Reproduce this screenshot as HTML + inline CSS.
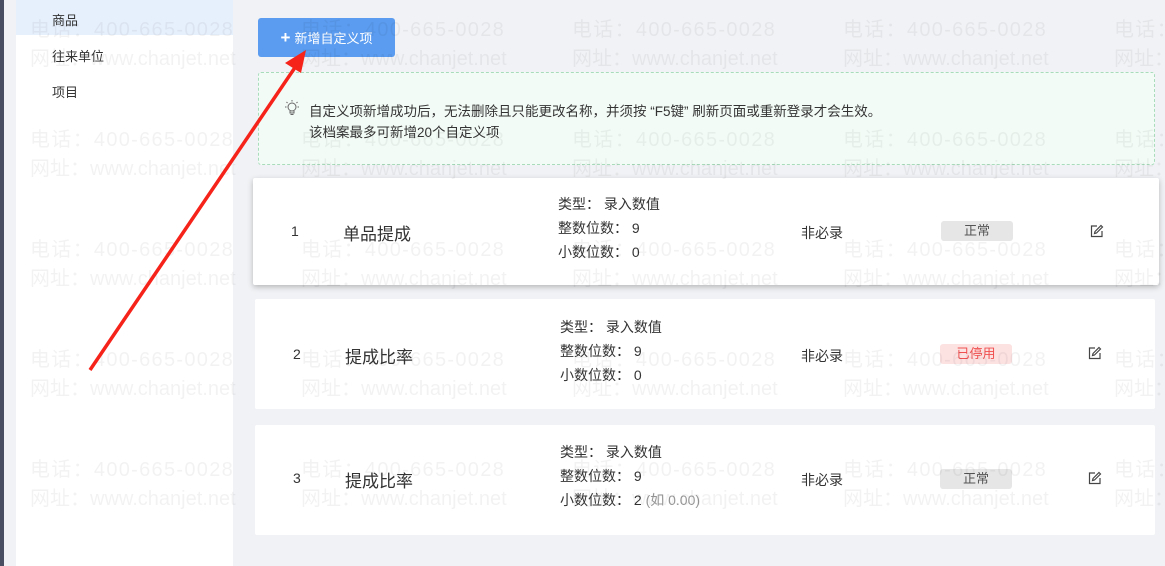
<!DOCTYPE html>
<html><head><meta charset="utf-8"><style>
*{margin:0;padding:0;box-sizing:border-box}
body{width:1165px;height:566px;overflow:hidden;position:relative;background:#f0f2f5;font-family:"Liberation Sans","Noto Sans CJK SC",sans-serif;color:#333;font-size:13px}
.abs{position:absolute}
.side{left:16px;top:0;width:217px;height:566px;background:#fff}
.strip{left:0;top:0;width:4px;height:566px;background:#4a4e63}
.nav{left:52px;font-size:13px;color:#333}
.btn{left:258px;top:18px;width:137px;height:39px;background:#5b9cf0;border-radius:3px;color:#fff;font-size:13px;line-height:39px;text-align:center}
.tip{left:258px;top:72px;width:897px;height:93px;border:1.5px dashed #a8dcbb;background:#f3fbf6;border-radius:3px}
.card{background:#fff;border-radius:2px}
.t{font-size:14px;color:#333}
.tag{width:72px;height:20px;line-height:20px;text-align:center;border-radius:3px;font-size:13px}
.wm{position:absolute;font-size:20px;color:rgba(0,0,0,0.05);white-space:nowrap;line-height:29px;pointer-events:none}
.wm b{font-weight:normal;letter-spacing:1.3px}
</style></head><body>
<div class="abs strip"></div>
<div class="abs side"></div>
<div class="abs" style="left:16px;top:0;width:217px;height:35px;background:#e6f0fc"></div>
<div class="abs nav" style="top:10px">商品</div>
<div class="abs nav" style="top:46px">往来单位</div>
<div class="abs nav" style="top:82px">项目</div>

<div class="abs btn"><span style="font-size:17px;font-weight:bold;margin-right:4px">+</span>新增自定义项</div>
<div class="abs tip"></div>
<svg class="abs" style="left:283px;top:99px" width="18" height="18" viewBox="0 0 18 18" fill="none" stroke="#666" stroke-width="1"><circle cx="9" cy="8" r="4"/><path d="M7 12v2h4v-2M7.5 15.5h3M9 1v1.5M2 8h1.5M14.5 8H16M3.5 3l1 1M14.5 3l-1 1"/></svg>
<div class="abs t" style="left:309px;top:100px;font-size:13.5px">自定义项新增成功后，无法删除且只能更改名称，并须按 “F5键” 刷新页面或重新登录才会生效。</div>
<div class="abs t" style="left:309px;top:121px;font-size:13.5px">该档案最多可新增20个自定义项</div>

<div class="abs card" style="left:253px;top:178px;width:906px;height:107px;box-shadow:0 2px 6px rgba(0,0,0,0.25)"></div>
<div class="abs card" style="left:255px;top:299px;width:900px;height:110px"></div>
<div class="abs card" style="left:255px;top:425px;width:900px;height:110px"></div>

<div class="abs t" style="left:291px;top:223px">1</div>
<div class="abs" style="left:343px;top:220px;font-size:17px">单品提成</div>
<div class="abs t" style="left:558px;top:194px">类型： 录入数值</div>
<div class="abs t" style="left:558px;top:218px">整数位数： 9</div>
<div class="abs t" style="left:558px;top:242px">小数位数： 0</div>
<div class="abs t" style="left:801px;top:223px">非必录</div>
<div class="abs tag" style="left:941px;top:221px;background:#e6e6e6;color:#555">正常</div>

<div class="abs t" style="left:293px;top:346px">2</div>
<div class="abs" style="left:345px;top:343px;font-size:17px">提成比率</div>
<div class="abs t" style="left:560px;top:317px">类型： 录入数值</div>
<div class="abs t" style="left:560px;top:341px">整数位数： 9</div>
<div class="abs t" style="left:560px;top:365px">小数位数： 0</div>
<div class="abs t" style="left:801px;top:346px">非必录</div>
<div class="abs tag" style="left:940px;top:344px;background:#fde2e2;color:#f05050">已停用</div>

<div class="abs t" style="left:293px;top:470px">3</div>
<div class="abs" style="left:345px;top:467px;font-size:17px">提成比率</div>
<div class="abs t" style="left:560px;top:442px">类型： 录入数值</div>
<div class="abs t" style="left:560px;top:466px">整数位数： 9</div>
<div class="abs t" style="left:560px;top:490px">小数位数： 2 <span style="color:#999">(如 0.00)</span></div>
<div class="abs t" style="left:801px;top:470px">非必录</div>
<div class="abs tag" style="left:940px;top:469px;background:#e6e6e6;color:#555">正常</div>

<svg class="abs" style="left:1090px;top:224px" width="14" height="14" viewBox="0 0 14 14" fill="none" stroke="#444" stroke-width="1.2"><path d="M7 2H1.5v10.5H12V7"/><path d="M11 1.5l1.5 1.5L6.5 9 4.5 9.5 5 7.5z"/></svg>
<svg class="abs" style="left:1088px;top:346px" width="14" height="14" viewBox="0 0 14 14" fill="none" stroke="#444" stroke-width="1.2"><path d="M7 2H1.5v10.5H12V7"/><path d="M11 1.5l1.5 1.5L6.5 9 4.5 9.5 5 7.5z"/></svg>
<svg class="abs" style="left:1088px;top:471px" width="14" height="14" viewBox="0 0 14 14" fill="none" stroke="#444" stroke-width="1.2"><path d="M7 2H1.5v10.5H12V7"/><path d="M11 1.5l1.5 1.5L6.5 9 4.5 9.5 5 7.5z"/></svg>

<div class="wm" style="left:30px;top:16px"><b>电话：400-665-0028</b><br>网址：www.chanjet.net</div>
<div class="wm" style="left:301px;top:16px"><b>电话：400-665-0028</b><br>网址：www.chanjet.net</div>
<div class="wm" style="left:572px;top:16px"><b>电话：400-665-0028</b><br>网址：www.chanjet.net</div>
<div class="wm" style="left:843px;top:16px"><b>电话：400-665-0028</b><br>网址：www.chanjet.net</div>
<div class="wm" style="left:1114px;top:16px"><b>电话：400-665-0028</b><br>网址：www.chanjet.net</div>
<div class="wm" style="left:30px;top:126px"><b>电话：400-665-0028</b><br>网址：www.chanjet.net</div>
<div class="wm" style="left:301px;top:126px"><b>电话：400-665-0028</b><br>网址：www.chanjet.net</div>
<div class="wm" style="left:572px;top:126px"><b>电话：400-665-0028</b><br>网址：www.chanjet.net</div>
<div class="wm" style="left:843px;top:126px"><b>电话：400-665-0028</b><br>网址：www.chanjet.net</div>
<div class="wm" style="left:1114px;top:126px"><b>电话：400-665-0028</b><br>网址：www.chanjet.net</div>
<div class="wm" style="left:30px;top:236px"><b>电话：400-665-0028</b><br>网址：www.chanjet.net</div>
<div class="wm" style="left:301px;top:236px"><b>电话：400-665-0028</b><br>网址：www.chanjet.net</div>
<div class="wm" style="left:572px;top:236px"><b>电话：400-665-0028</b><br>网址：www.chanjet.net</div>
<div class="wm" style="left:843px;top:236px"><b>电话：400-665-0028</b><br>网址：www.chanjet.net</div>
<div class="wm" style="left:1114px;top:236px"><b>电话：400-665-0028</b><br>网址：www.chanjet.net</div>
<div class="wm" style="left:30px;top:346px"><b>电话：400-665-0028</b><br>网址：www.chanjet.net</div>
<div class="wm" style="left:301px;top:346px"><b>电话：400-665-0028</b><br>网址：www.chanjet.net</div>
<div class="wm" style="left:572px;top:346px"><b>电话：400-665-0028</b><br>网址：www.chanjet.net</div>
<div class="wm" style="left:843px;top:346px"><b>电话：400-665-0028</b><br>网址：www.chanjet.net</div>
<div class="wm" style="left:1114px;top:346px"><b>电话：400-665-0028</b><br>网址：www.chanjet.net</div>
<div class="wm" style="left:30px;top:456px"><b>电话：400-665-0028</b><br>网址：www.chanjet.net</div>
<div class="wm" style="left:301px;top:456px"><b>电话：400-665-0028</b><br>网址：www.chanjet.net</div>
<div class="wm" style="left:572px;top:456px"><b>电话：400-665-0028</b><br>网址：www.chanjet.net</div>
<div class="wm" style="left:843px;top:456px"><b>电话：400-665-0028</b><br>网址：www.chanjet.net</div>
<div class="wm" style="left:1114px;top:456px"><b>电话：400-665-0028</b><br>网址：www.chanjet.net</div>

<svg class="abs" style="left:0;top:0" width="1165" height="566"><line x1="90" y1="370" x2="296" y2="66" stroke="#f5231a" stroke-width="3.5"/><polygon points="306,50 285,63 301,73" fill="#f5231a"/></svg>
</body></html>
